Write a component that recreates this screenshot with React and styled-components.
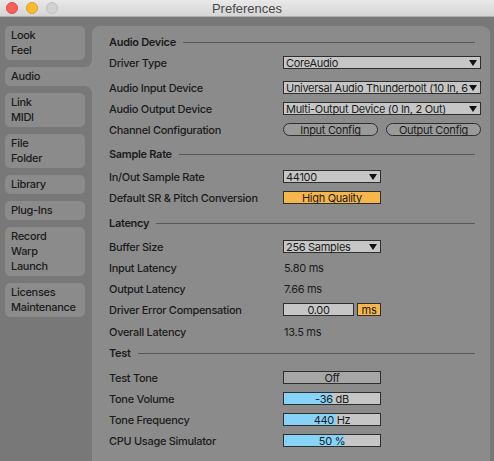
import React from "react";
import styled, { createGlobalStyle } from "styled-components";

const PANEL = "#8b8b8b";
const BACK = "#787878";
const INK = "#1b1b1b";

const GlobalStyle = createGlobalStyle`
  html, body {
    margin: 0;
    padding: 0;
    background: ${BACK};
  }
  * {
    box-sizing: border-box;
  }
`;

const Window = styled.div`
  width: 494px;
  height: 461px;
  overflow: hidden;
  display: flex;
  flex-direction: column;
  background: ${BACK};
  font-family: Inter, "Noto Sans", sans-serif;
  letter-spacing: -0.3px;
  color: ${INK};
`;

const TitleBar = styled.div`
  height: 17px;
  flex: none;
  display: flex;
  align-items: center;
  position: relative;
  background: linear-gradient(#e9e9e9, #d5d5d5);
  border-bottom: 1px solid #b0b0b0;
`;

const Lights = styled.div`
  display: flex;
  gap: 8px;
  padding-left: 6px;
`;

const Light = styled.span`
  width: 12px;
  height: 12px;
  border-radius: 50%;
  background: ${(p) => p.$c};
  border: 0.5px solid ${(p) => p.$b};
`;

const Title = styled.div`
  position: absolute;
  left: 0;
  right: 0;
  text-align: center;
  font-family: "Liberation Sans", Arial, sans-serif;
  font-size: 13px;
  letter-spacing: 0;
  color: #4a4a4a;
  pointer-events: none;
`;

const Body = styled.div`
  flex: 1;
  display: flex;
  min-height: 0;
`;

const Sidebar = styled.div`
  width: 92px;
  flex: none;
  padding: 9px 0 0 5px;
  display: flex;
  flex-direction: column;
  gap: 7px;
`;

const Tab = styled.div`
  position: relative;
  width: ${(p) => (p.$active ? "87px" : "80px")};
  padding: 2px 6px 2px 6px;
  background: ${PANEL};
  border-radius: ${(p) => (p.$active ? "5px 0 0 5px" : "5px")};
  font-size: 11px;
  font-weight: 500;
  line-height: 15px;

  ${(p) =>
    p.$active &&
    `
    &::before, &::after {
      content: "";
      position: absolute;
      right: 0;
      width: 7px;
      height: 7px;
    }
    &::before {
      top: -7px;
      background: radial-gradient(circle at 0 0, transparent 6.5px, ${PANEL} 7px);
    }
    &::after {
      bottom: -7px;
      background: radial-gradient(circle at 0 100%, transparent 6.5px, ${PANEL} 7px);
    }
  `}
`;

const Panel = styled.div`
  flex: 1;
  margin: 9px 4px 0 0;
  background: ${PANEL};
  border-radius: 8px 8px 0 0;
  padding: 6px 9px 0 17px;
  display: flex;
  flex-direction: column;
`;

const Header = styled.div`
  height: 20px;
  margin-top: ${(p) => p.$mt || 0}px;
  margin-right: 6px;
  display: flex;
  align-items: center;
  gap: 7px;
  font-size: 11px;
  font-weight: 600;

  &::after {
    content: "";
    flex: 1;
    height: 1px;
    background: #585858;
  }
`;

const Row = styled.div`
  height: 21px;
  margin-top: ${(p) => p.$mt || 0}px;
  display: grid;
  grid-template-columns: 174px 1fr;
  align-items: center;
  font-size: 11px;
`;

const Label = styled.div`
  font-weight: 500;
  white-space: nowrap;
`;

const Controls = styled.div`
  display: flex;
  align-items: center;
  gap: ${(p) => p.$gap || 0}px;
`;

const Box = styled.div`
  width: ${(p) => p.$w}px;
  height: 13px;
  border: 1px solid #2e2e2e;
  display: flex;
  align-items: center;
  justify-content: ${(p) => (p.$center ? "center" : "flex-start")};
  padding: 0 2px;
  font-size: 11px;
  white-space: nowrap;
  background: ${(p) => p.$bg || "#c6c6c6"};
`;

const SelectText = styled.span`
  flex: 1;
  min-width: 0;
  overflow-x: clip;
  overflow-y: visible;
  line-height: normal;
`;

const Arrow = styled.span`
  flex: none;
  width: 0;
  height: 0;
  margin-left: 1px;
  margin-right: 1px;
  border-left: 4px solid transparent;
  border-right: 4px solid transparent;
  border-top: 6px solid #111;
`;

const Meter = styled(Box)`
  justify-content: center;
  background: linear-gradient(
    to right,
    #87d3f8 ${(p) => p.$fill}%,
    #c6c6c6 ${(p) => p.$fill}%
  );
`;

const Pill = styled.div`
  width: ${(p) => p.$w}px;
  height: 13px;
  border: 1px solid #2e2e2e;
  border-radius: 6.5px;
  background: #9a9a9a;
  display: flex;
  align-items: center;
  justify-content: center;
  font-size: 11px;
`;

const Value = styled.div`
  padding-left: 1px;
`;

const Select = ({ w, children }) => (
  <Box $w={w}>
    <SelectText>{children}</SelectText>
    <Arrow />
  </Box>
);

const tabs = [
  ["Look", "Feel"],
  ["Audio"],
  ["Link", "MIDI"],
  ["File", "Folder"],
  ["Library"],
  ["Plug-Ins"],
  ["Record", "Warp", "Launch"],
  ["Licenses", "Maintenance"],
];

const ORANGE = "#f7b64b";

export default function App() {
  return (
    <>
      <GlobalStyle />
      <Window>
        <TitleBar>
          <Lights>
            <Light $c="#fc5f57" $b="#de4a42" />
            <Light $c="#fdbc2e" $b="#de9f22" />
            <Light $c="#d2d2d2" $b="#bdbdbd" />
          </Lights>
          <Title>Preferences</Title>
        </TitleBar>
        <Body>
          <Sidebar>
            {tabs.map((t) => (
              <Tab key={t[0]} $active={t[0] === "Audio"}>
                {t.map((line) => (
                  <div key={line}>{line}</div>
                ))}
              </Tab>
            ))}
          </Sidebar>
          <Panel>
            <Header>Audio Device</Header>
            <Row>
              <Label>Driver Type</Label>
              <Select w={198}>CoreAudio</Select>
            </Row>
            <Row $mt={4}>
              <Label>Audio Input Device</Label>
              <Select w={198}>Universal Audio Thunderbolt (10 In, 6 Out)</Select>
            </Row>
            <Row>
              <Label>Audio Output Device</Label>
              <Select w={198}>Multi-Output Device (0 In, 2 Out)</Select>
            </Row>
            <Row>
              <Label>Channel Configuration</Label>
              <Controls $gap={8}>
                <Pill $w={95}>Input Config</Pill>
                <Pill $w={95}>Output Config</Pill>
              </Controls>
            </Row>

            <Header $mt={4}>Sample Rate</Header>
            <Row $mt={2}>
              <Label>In/Out Sample Rate</Label>
              <Select w={98}>44100</Select>
            </Row>
            <Row>
              <Label>Default SR &amp; Pitch Conversion</Label>
              <Box $w={98} $center $bg={ORANGE}>
                High Quality
              </Box>
            </Row>

            <Header $mt={5}>Latency</Header>
            <Row $mt={3}>
              <Label>Buffer Size</Label>
              <Select w={98}>256 Samples</Select>
            </Row>
            <Row>
              <Label>Input Latency</Label>
              <Value>5.80 ms</Value>
            </Row>
            <Row>
              <Label>Output Latency</Label>
              <Value>7.66 ms</Value>
            </Row>
            <Row>
              <Label>Driver Error Compensation</Label>
              <Controls $gap={3}>
                <Box $w={71} $center>
                  0.00
                </Box>
                <Box $w={24} $center $bg={ORANGE}>
                  ms
                </Box>
              </Controls>
            </Row>
            <Row $mt={1}>
              <Label>Overall Latency</Label>
              <Value>13.5 ms</Value>
            </Row>

            <Header $mt={1}>Test</Header>
            <Row $mt={4}>
              <Label>Test Tone</Label>
              <Box $w={98} $center $bg="#a6a6a6">
                Off
              </Box>
            </Row>
            <Row>
              <Label>Tone Volume</Label>
              <Meter $w={98} $fill={50}>
                -36 dB
              </Meter>
            </Row>
            <Row>
              <Label>Tone Frequency</Label>
              <Meter $w={98} $fill={54}>
                440 Hz
              </Meter>
            </Row>
            <Row>
              <Label>CPU Usage Simulator</Label>
              <Meter $w={98} $fill={62}>
                50 %
              </Meter>
            </Row>
          </Panel>
        </Body>
      </Window>
    </>
  );
}
